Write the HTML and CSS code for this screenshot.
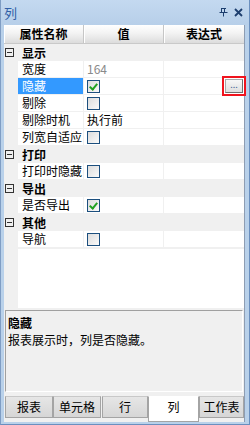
FILE: index.html
```html
<!DOCTYPE html>
<html lang="zh">

<head>
    <meta charset="UTF-8">
    <title>列</title>
    <link rel="stylesheet" href="styles.css">
</head>

<body>
    <div class="panel">
        <div class="title">
            <span class="title-text">列</span>
            <svg class="pin" width="9" height="9" viewBox="0 0 9 9">
                <path d="M2 0.5h5M2.5 0.5v4M5.5 0.5v4M0.5 4.5h8M4.5 4.5v4" stroke="#1d3e6e" stroke-width="1" fill="none"/>
            </svg>
            <svg class="close" width="9" height="9" viewBox="0 0 9 9">
                <path d="M1 1L8 8M8 1L1 8" stroke="#1d3e6e" stroke-width="1.8" fill="none"/>
            </svg>
        </div>
        <div class="main">
            <div class="grid">
                <div class="head">
                    <div class="hcell c-name">属性名称</div>
                    <div class="hcell c-val">值</div>
                    <div class="hcell c-expr">表达式</div>
                </div>

                <div class="group"><span class="box"></span>显示</div>
                <div class="row">
                    <div class="gut"></div>
                    <div class="name">宽度</div>
                    <div class="val grey">164</div>
                    <div class="expr"></div>
                </div>
                <div class="row">
                    <div class="gut"></div>
                    <div class="name sel">隐藏</div>
                    <div class="val"><span class="chk on"></span></div>
                    <div class="expr"><span class="dots">...</span></div>
                </div>
                <div class="row">
                    <div class="gut"></div>
                    <div class="name">剔除</div>
                    <div class="val"><span class="chk"></span></div>
                    <div class="expr"></div>
                </div>
                <div class="row">
                    <div class="gut"></div>
                    <div class="name">剔除时机</div>
                    <div class="val">执行前</div>
                    <div class="expr"></div>
                </div>
                <div class="row">
                    <div class="gut"></div>
                    <div class="name">列宽自适应</div>
                    <div class="val"><span class="chk"></span></div>
                    <div class="expr"></div>
                </div>

                <div class="group"><span class="box"></span>打印</div>
                <div class="row">
                    <div class="gut"></div>
                    <div class="name">打印时隐藏</div>
                    <div class="val"><span class="chk"></span></div>
                    <div class="expr"></div>
                </div>

                <div class="group"><span class="box"></span>导出</div>
                <div class="row">
                    <div class="gut"></div>
                    <div class="name">是否导出</div>
                    <div class="val"><span class="chk on"></span></div>
                    <div class="expr"></div>
                </div>

                <div class="group"><span class="box"></span>其他</div>
                <div class="row">
                    <div class="gut"></div>
                    <div class="name">导航</div>
                    <div class="val"><span class="chk"></span></div>
                    <div class="expr"></div>
                </div>

                <div class="filler">
                    <div class="gut"></div>
                </div>
            </div>

            <div class="desc">
                <p class="desc-title">隐藏</p>
                <p>报表展示时，列是否隐藏。</p>
            </div>

            <ul class="tabs">
                <li>报表</li>
                <li>单元格</li>
                <li>行</li>
                <li class="active">列</li>
                <li>工作表</li>
            </ul>
        </div>
    </div>
</body>

</html>
```

FILE: styles.css
```css
* {
    margin: 0;
    padding: 0;
    list-style: none;
    box-sizing: border-box;
}

body {
    font-family: "Noto Sans CJK SC", "DejaVu Sans", sans-serif;
    font-size: 12px;
    color: #000;
}

.panel {
    width: 250px;
    height: 425px;
    display: flex;
    flex-direction: column;
    background-color: #b9d1ea;
    border-left: 1px solid #7f9dc4;
    border-right: 1px solid #6a8fbf;
    border-bottom: 1px solid #6a8fbf;
}

.title {
    height: 25px;
    display: flex;
    align-items: center;
    padding: 0 6px 0 3px;
    background: linear-gradient(#c4d9f0, #b7cfe9);
}

.title-text {
    flex: 1;
    color: #2f5ea6;
    font-size: 13px;
}

.pin {
    margin-right: 6px;
}

.main {
    flex: 1;
    display: flex;
    flex-direction: column;
    margin: 0 4px 2px 3px;
    background-color: #f0f0f0;
    border-right: 1px solid #8d9db3;
}

.grid {
    flex: 1;
    display: flex;
    flex-direction: column;
    background-color: #fff;
}

.head {
    display: flex;
    height: 19px;
    font-weight: bold;
    background: linear-gradient(#ffffff, #f3f3f3 45%, #dcdcdc);
    border-bottom: 1px solid #c9c9c9;
}

.hcell {
    text-align: center;
    line-height: 18px;
    border-right: 1px solid #c6c6c6;
    box-shadow: inset 1px 0 #fff;
}

.hcell.c-name {
    width: 80px;
}

.hcell.c-val {
    width: 80px;
}

.hcell.c-expr {
    flex: 1;
    border-right: none;
}

.group {
    height: 17px;
    display: flex;
    align-items: center;
    background-color: #f0f0f0;
    font-weight: bold;
    padding-left: 1px;
}

.box {
    width: 9px;
    height: 9px;
    border: 1px solid #333;
    margin-right: 8px;
    position: relative;
}

.box::after {
    content: "";
    position: absolute;
    left: 1px;
    top: 3px;
    width: 5px;
    height: 1px;
    background-color: #333;
}

.row {
    display: flex;
    height: 17px;
    border-bottom: 1px solid #f0f0f0;
}

.gut {
    width: 14px;
    background-color: #f0f0f0;
}

.name,
.val,
.expr {
    line-height: 16px;
    border-right: 1px solid #f0f0f0;
}

.name {
    width: 66px;
    padding-left: 4px;
    white-space: nowrap;
    overflow: hidden;
}

.name.sel {
    background-color: #3399ff;
    color: #fff;
}

.val {
    width: 80px;
    padding-left: 3px;
    display: flex;
    align-items: center;
}

.val.grey {
    color: #8a8a8a;
}

.expr {
    flex: 1;
    border-right: none;
    display: flex;
    align-items: center;
    justify-content: flex-end;
    padding-right: 1px;
}

.chk {
    width: 13px;
    height: 13px;
    border: 1px solid #1c4f7e;
    background: linear-gradient(135deg, #dcdcdc, #fafafa);
    position: relative;
}

.chk.on::after {
    content: "";
    position: absolute;
    left: 3px;
    top: 1px;
    width: 3px;
    height: 6px;
    border: solid #21a121;
    border-width: 0 2px 2px 0;
    transform: rotate(40deg);
}

.dots {
    width: 18px;
    height: 14px;
    font-size: 9px;
    line-height: 10px;
    text-align: center;
    color: #4a6a9a;
    background: linear-gradient(#f7f7f7, #dedede);
    border: 1px solid #a8a8a8;
    border-right-color: #6f6f6f;
    border-bottom-color: #6f6f6f;
    outline: 2px solid #f0141e;
    outline-offset: 1px;
}

.filler {
    flex: 1;
    display: flex;
    border-top: 1px solid #f0f0f0;
}

.desc {
    height: 82px;
    margin: 2px 1px 0 1px;
    padding: 3px 2px;
    border: 1px solid #a0a0a0;
    border-right-color: #fff;
    border-bottom-color: #fff;
    background-color: #f0f0f0;
    line-height: 17px;
}

.desc-title {
    font-weight: bold;
}

.tabs {
    display: flex;
    height: 30px;
    padding: 4px 0 0 1px;
    background-color: #f0f0f0;
    align-items: flex-start;
}

.tabs li {
    height: 22px;
    line-height: 20px;
    text-align: center;
    border: 1px solid #a4a4a4;
    border-top-color: #c8c8c8;
    background: linear-gradient(#e6e6e6, #d6d6d6);
    width: 48px;
}

.tabs li:nth-child(3) {
    width: 46px;
    margin-left: 1px;
}

.tabs li.active {
    width: 51px;
    height: 26px;
    background: #fff;
    border-color: #fff #a4a4a4 #a4a4a4 #a4a4a4;
}

.tabs li:last-child {
    flex: 1;
}
```
